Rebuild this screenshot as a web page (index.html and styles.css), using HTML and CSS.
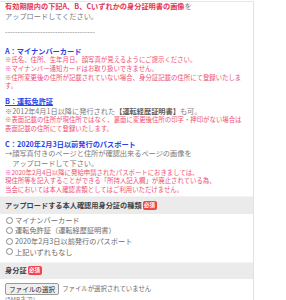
FILE: index.html
```html
<!DOCTYPE html>
<html lang="ja">
  <head>
    <meta charset="UTF-8">
    <title>本人確認書類のアップロード</title>
    <link rel="stylesheet" href="styles.css">
  </head>
  <body>
    <div class="panel">
      <div class="notes">
        <p class="lead"><strong class="alert">有効期限内の下記A、B、Cいずれかの身分証明書の画像</strong>を<br>アップロードしてください。</p>
        <p class="rule">------------------------------------</p>

        <div class="doc doc-first">
          <h3>A：マイナンバーカード</h3>
          <p class="warn">※氏名、住所、生年月日、顔写真が見えるようにご提示ください。<br>※マイナンバー通知カードはお取り扱いできません。<br>※住所変更後の住所が記載されていない場合、身分証記載の住所にて登録いたします。</p>
        </div>

        <div class="doc">
          <h3 class="linked">B：運転免許証</h3>
          <p>※2012年4月1日以降に発行された<b>【運転経歴証明書】</b>も可。</p>
          <p class="warn">※表面記載の住所が現住所ではなく、裏面に変更後住所の印字・押印がない場合は表面記載の住所にて登録いたします。</p>
        </div>

        <div class="doc">
          <h3>C：2020年2月3日以前発行のパスポート</h3>
          <p>→顔写真付きのページと住所が確認出来るページの画像を<br>　アップロードして下さい。</p>
          <p class="warn">※2020年2月4日以降に発給申請されたパスポートにおきましては、<br>現住所等を記入することができる「所持人記入欄」が廃止されている為、<br>当会においては本人確認書類としてはご利用いただけません。</p>
        </div>
      </div>

      <div class="field-head">アップロードする本人確認用身分証の種類<span class="req">必須</span></div>
      <div class="choices">
        <label class="choice"><input type="radio" name="doc_type"> マイナンバーカード</label>
        <label class="choice"><input type="radio" name="doc_type"> 運転免許証（運転経歴証明書）</label>
        <label class="choice"><input type="radio" name="doc_type"> 2020年2月3日以前発行のパスポート</label>
        <label class="choice"><input type="radio" name="doc_type"> 上記いずれもなし</label>
      </div>

      <div class="field-head field-head-small">身分証<span class="req">必須</span></div>
      <div class="upload">
        <div class="file-row">
          <button type="button" class="file-btn">ファイルの選択</button>
          <span class="file-name">ファイルが選択されていません</span>
        </div>
        <p class="hint">(5MBまで)</p>
      </div>
    </div>
  </body>
</html>
```

FILE: styles.css
```css
* {
  box-sizing: border-box;
}
body {
  margin: 0;
  font-family: "Noto Sans CJK JP", "Noto Sans", sans-serif;
  font-size: 7.2px;
  line-height: 9.6px;
  color: #7a7a7a;
  background: #fff;
}
p {
  margin: 0;
}
h3 {
  margin: 0;
  font-size: 7.2px;
  line-height: 9.6px;
  font-weight: bold;
  color: #2a3fe8;
}
h3.linked {
  text-decoration: underline;
}
.panel {
  width: 254px;
  margin-top: 1px;
  border-top: 1px solid #e6e6e6;
  border-right: 1px solid #e2e2e2;
}
.notes {
  padding: 0 8px 0 5px;
}
.alert {
  color: #e33456;
}
.rule {
  margin-top: 7px;
  letter-spacing: 0;
}
.doc {
  margin-top: 6px;
}
.doc-first {
  margin-top: 9px;
}
.doc b {
  color: #5a5a5a;
}
.warn {
  font-size: 6.4px;
  line-height: 8.7px;
  color: #ee4f73;
}
.field-head {
  margin-top: 1px;
  padding: 4px 5px;
  border-top: 1px solid #f3f3f3;
  background: #ebebeb;
  font-weight: bold;
  color: #444;
  display: flex;
  align-items: center;
}
.field-head-small {
  margin-top: 5px;
  padding: 3px 5px;
}
.req {
  margin-left: 1px;
  padding: 0 1.5px;
  border-radius: 2px;
  background: #ef4444;
  color: #fff;
  font-size: 5.5px;
  line-height: 9px;
  font-weight: bold;
}
.choices {
  padding: 0.5px 5px 0;
}
.choice {
  display: flex;
  align-items: center;
  gap: 2px;
  line-height: 10.6px;
  color: #6a6a6a;
}
.choice input {
  appearance: none;
  margin: 0 0 0 1px;
  width: 7px;
  height: 7px;
  border: 1px solid #8a8a8a;
  border-radius: 50%;
  background: #fff;
}
.upload {
  padding: 4px 5px 0;
}
.file-row {
  display: flex;
  align-items: center;
  gap: 3px;
}
.file-btn {
  font-family: inherit;
  font-size: 6.6px;
  line-height: 8px;
  padding: 1px 3px;
  border: 1px solid #9a9a9a;
  border-radius: 2px;
  background: #efefef;
  color: #222;
}
.file-name {
  font-size: 6.4px;
  color: #6a6a6a;
}
.hint {
  font-size: 6.4px;
  line-height: 9.6px;
}
```
